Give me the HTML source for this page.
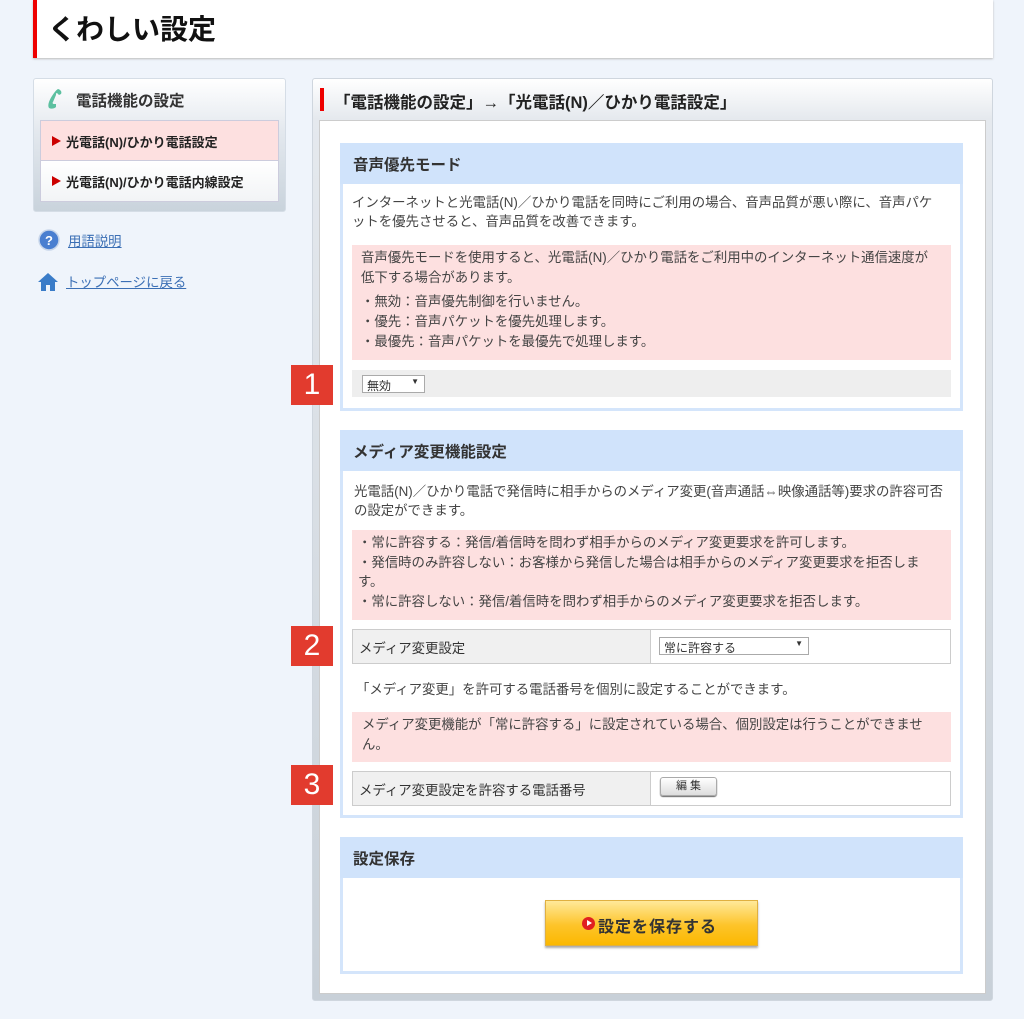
<!DOCTYPE html>
<html><head><meta charset="utf-8"><style>
*{margin:0;padding:0;box-sizing:border-box}
body{width:1024px;height:1019px;background:#eff4fb;font-family:"Liberation Sans","Noto Sans CJK JP",sans-serif;color:#333;position:relative;overflow:hidden;font-size:13.4px}
.a{position:absolute;white-space:nowrap}
.hdr{left:33px;top:0;width:960px;height:58px;background:#fff;border-left:4px solid #e00;box-shadow:0 1px 2px #bbb}
.hdr h1{position:absolute;left:11px;top:8px;font-size:28px;font-weight:bold;color:#111}
.side{left:33px;top:78px;width:253px;height:134px;border:1px solid #d5dde6;border-radius:3px;background:linear-gradient(#fff,#e3e8ee 40%,#c9d3dc)}
.side .t{position:absolute;left:42px;top:10px;font-size:15.5px;font-weight:bold;color:#333}
.item{position:absolute;left:6px;width:239px;height:41px;font-size:13px;font-weight:bold;color:#222;padding:11px 0 0 25px}
.item:before{content:"";position:absolute;left:11px;top:15px;border-left:9px solid #c00;border-top:5px solid transparent;border-bottom:5px solid transparent}
.lnk{color:#3b6fb5;text-decoration:underline;font-size:13.4px}
.main{left:312px;top:78px;width:681px;height:923px;border:1px solid #cfd6de;border-radius:3px;background:linear-gradient(#fff,#e5e9ee 40px,#c8d0d8)}
.inner{left:319px;top:120px;width:667px;height:874px;background:#fff;border:1px solid #ccc}
.sec{position:absolute;background:#fff;border:3px solid #d4e5fb;border-top:0}
.sh{position:absolute;left:-3px;right:-3px;top:0;height:41px;background:#d0e3fb;font-size:15.5px;font-weight:bold;padding:10px 0 0 13px;color:#333}
.pink{position:absolute;background:#fde0e0;line-height:20px;color:#444}
.num{position:absolute;left:291px;width:42px;height:40px;background:#e23b2e;color:#fff;font-size:30px;text-align:center;line-height:40px}
.row{position:absolute;left:352px;width:599px;height:35px;border:1px solid #ccc;background:#fff}
.row .l{position:absolute;left:0;top:0;bottom:0;width:298px;background:#f0f0f0;border-right:1px solid #ccc;padding:7px 0 0 6px}
.sel{position:absolute;border:1px solid #aaa;background:#fff;font-size:12px;padding:1px 4px;height:18px}
.sel:after{content:"▼";position:absolute;right:5px;top:1px;font-size:8px}
p.tx{position:absolute;line-height:19px;color:#444}
</style></head><body>
<div class="a hdr"><h1>くわしい設定</h1></div>

<div class="a side">
<svg style="position:absolute;left:10px;top:8px" width="22" height="24" viewBox="0 0 22 24"><path d="M14 2c3 1 4 3 3 5l-2 1-2-2c-1 0-1 1-1 2l-3 7c-1 1 0 2 1 2l2 0 0 3c-2 2-5 2-7 1-2-3 1-9 3-12 2-3 4-6 6-7z" fill="#5cc0a0"/></svg>
<div class="t">電話機能の設定</div>
<div class="item" style="top:41px;background:#fde0e0;border:1px solid #ccd">光電話(N)/ひかり電話設定</div>
<div class="item" style="top:82px;background:linear-gradient(#fff,#f2f4f6);border:1px solid #ccd;border-top:0">光電話(N)/ひかり電話内線設定</div>
</div>
<svg class="a" style="left:38px;top:229px" width="22" height="22"><circle cx="11" cy="11" r="10" fill="#4a7fd0"/><circle cx="11" cy="11" r="10" fill="none" stroke="#c8d6ea" stroke-width="1.5"/><text x="11" y="16" font-size="13" font-weight="bold" fill="#fff" text-anchor="middle" font-family="Liberation Sans">?</text></svg>
<div class="a lnk" style="left:68px;top:230px">用語説明</div>
<svg class="a" style="left:37px;top:271px" width="22" height="22"><path d="M11 2L1 11h3v9h5v-6h4v6h5v-9h3z" fill="#3a7cc8"/></svg>
<div class="a lnk" style="left:66px;top:271px">トップページに戻る</div>

<div class="a main"></div>
<div class="a" style="left:320px;top:88px;width:4px;height:23px;background:#e00"></div>
<div class="a" style="left:334px;top:89px;font-size:16.5px;font-weight:bold;color:#222">「電話機能の設定」→「光電話(N)／ひかり電話設定」</div>
<div class="a inner"></div>

<div class="sec" style="left:340px;top:143px;width:623px;height:268px">
<div class="sh">音声優先モード</div>
<p class="tx" style="left:9px;top:50px">インターネットと光電話(N)／ひかり電話を同時にご利用の場合、音声品質が悪い際に、音声パケ<br>ットを優先させると、音声品質を改善できます。</p>
<div class="pink" style="left:9px;top:102px;width:599px;height:115px;padding:3px 0 0 9px">音声優先モードを使用すると、光電話(N)／ひかり電話をご利用中のインターネット通信速度が<br>低下する場合があります。<div style="margin-top:4px">・無効：音声優先制御を行いません。<br>・優先：音声パケットを優先処理します。<br>・最優先：音声パケットを最優先で処理します。</div></div>
<div style="position:absolute;left:9px;top:227px;width:599px;height:27px;background:#eee"></div>
<div class="sel" style="left:19px;top:232px;width:63px">無効</div>
</div>

<div class="sec" style="left:340px;top:430px;width:623px;height:388px">
<div class="sh">メディア変更機能設定</div>
<p class="tx" style="left:11px;top:52px">光電話(N)／ひかり電話で発信時に相手からのメディア変更(音声通話⇔映像通話等)要求の許容可否<br>の設定ができます。</p>
<div class="pink" style="left:9px;top:100px;width:599px;height:90px;padding:3px 0 0 6px;line-height:19.5px">・常に許容する：発信/着信時を問わず相手からのメディア変更要求を許可します。<br>・発信時のみ許容しない：お客様から発信した場合は相手からのメディア変更要求を拒否しま<br>す。<br>・常に許容しない：発信/着信時を問わず相手からのメディア変更要求を拒否します。</div>
<p class="tx" style="left:13px;top:250px">「メディア変更」を許可する電話番号を個別に設定することができます。</p>
<div class="pink" style="left:9px;top:282px;width:599px;height:50px;padding:3px 0 0 10px">メディア変更機能が「常に許容する」に設定されている場合、個別設定は行うことができませ<br>ん。</div>
</div>
<div class="row" style="top:629px"><div class="l">メディア変更設定</div><div class="sel" style="left:306px;top:7px;width:150px">常に許容する</div></div>
<div class="row" style="top:771px"><div class="l">メディア変更設定を許容する電話番号</div>
<div style="position:absolute;left:307px;top:5px;width:57px;height:19px;border:1px solid #aaa;border-radius:3px;background:linear-gradient(#fff,#ddd);box-shadow:0 1px 1px #666;font-size:11px;text-align:center;line-height:17px">編 集</div></div>

<div class="num" style="top:365px">1</div>
<div class="num" style="top:626px">2</div>
<div class="num" style="top:765px">3</div>

<div class="sec" style="left:340px;top:837px;width:623px;height:137px">
<div class="sh">設定保存</div>
<div style="position:absolute;left:202px;top:63px;width:213px;height:46px;border:1px solid #e0b040;background:linear-gradient(#ffe99a,#fdc42a 55%,#fbb800);box-shadow:0 2px 2px #aaa;font-size:16px;font-weight:bold;color:#333;padding:12px 0 0 52px;letter-spacing:1px">
<span style="position:absolute;left:36px;top:16px;width:13px;height:13px;border-radius:50%;background:#e02020"></span><span style="position:absolute;left:41px;top:19px;border-left:5px solid #fff;border-top:3px solid transparent;border-bottom:3px solid transparent"></span>設定を保存する</div>
</div>
</body></html>
